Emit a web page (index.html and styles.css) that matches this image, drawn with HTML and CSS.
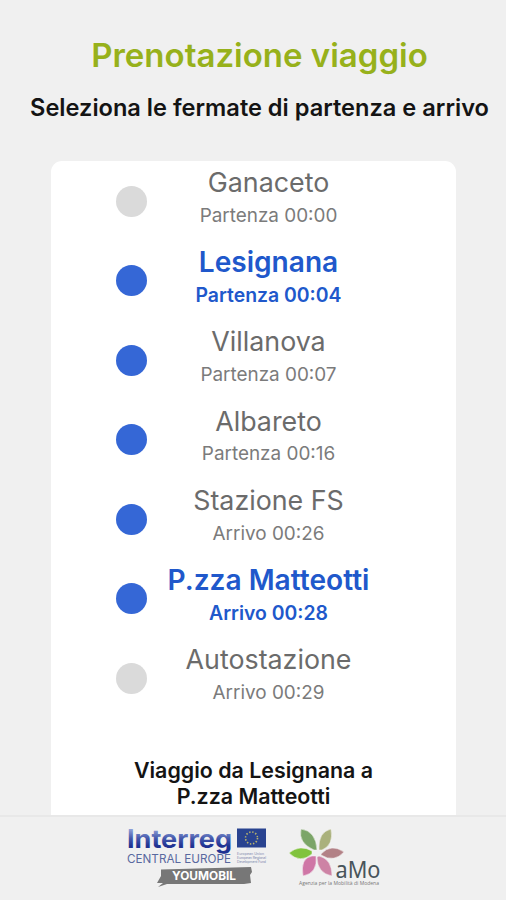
FILE: index.html
```html
<!DOCTYPE html>
<html lang="it">
<head>
<meta charset="utf-8">
<title>Prenotazione viaggio</title>
<link rel="stylesheet" href="styles.css">
</head>
<body>
<main class="screen">
  <header class="heading">
    <h1 class="title">Prenotazione viaggio</h1>
    <p class="subtitle">Seleziona le fermate di partenza e arrivo</p>
  </header>
  <section class="card">
    <ul class="stops">
      <li class="stop"><span class="dot dot-off"></span><div class="info"><span class="name">Ganaceto</span><span class="time">Partenza 00:00</span></div></li>
      <li class="stop selected"><span class="dot"></span><div class="info"><span class="name">Lesignana</span><span class="time">Partenza 00:04</span></div></li>
      <li class="stop"><span class="dot"></span><div class="info"><span class="name">Villanova</span><span class="time">Partenza 00:07</span></div></li>
      <li class="stop"><span class="dot"></span><div class="info"><span class="name">Albareto</span><span class="time">Partenza 00:16</span></div></li>
      <li class="stop"><span class="dot"></span><div class="info"><span class="name">Stazione FS</span><span class="time">Arrivo 00:26</span></div></li>
      <li class="stop selected"><span class="dot"></span><div class="info"><span class="name">P.zza Matteotti</span><span class="time">Arrivo 00:28</span></div></li>
      <li class="stop"><span class="dot dot-off"></span><div class="info"><span class="name">Autostazione</span><span class="time">Arrivo 00:29</span></div></li>
    </ul>
    <p class="summary">Viaggio da Lesignana a<br>P.zza Matteotti</p>
  </section>
  <footer class="footer">
    <svg class="interreg" viewBox="0 0 146 64" width="146" height="64">
      <defs>
        <linearGradient id="ink" x1="0" y1="0" x2="0" y2="1">
          <stop offset="0.2" stop-color="#8d9ed6"/>
          <stop offset="0.5" stop-color="#4357ab"/>
          <stop offset="0.75" stop-color="#1f3292"/>
        </linearGradient>
      </defs>
      <text x="2" y="21.500" class="logo-main" textLength="105" lengthAdjust="spacingAndGlyphs" fill="url(#ink)">Interreg</text>
      <text x="2" y="37" class="logo-sub" textLength="104" lengthAdjust="spacingAndGlyphs">CENTRAL EUROPE</text>
      <rect x="112" y="2.500" width="29" height="19" fill="#294390"/>
      <circle cx="126.500" cy="12" r="6" fill="none" stroke="#b9b36c" stroke-width="1.600" stroke-dasharray="1.400 1.742"/>
      <text x="112" y="28.500" class="logo-fine" textLength="27">European Union</text>
      <text x="112" y="32.500" class="logo-fine" textLength="29">European Regional</text>
      <text x="112" y="36.500" class="logo-fine" textLength="29">Development Fund</text>
      <path d="M36 43.500 L126 41 L127 46 L125 49 L126 57 L119 58 L42 58 L33 61 L38 57 L32 57 L36 50 Z" fill="#777"/>
      <text x="47" y="54" class="logo-tag" textLength="64" lengthAdjust="spacingAndGlyphs">YOUMOBIL</text>
    </svg>
    <svg class="amo" viewBox="0 0 100 64" width="100" height="64">
      <g stroke="#f7f5f5" stroke-width="0.500">
        <path d="M29 24 Q13 17 16 3 Q31 5 32 24 Z" fill="#7ba568"/>
        <path d="M34 24 Q33 6 46 3 Q49 19 37 24 Z" fill="#aab17c"/>
        <path d="M27 28 Q15 38 4 27 Q15 18 27 25 Z" fill="#80c33d"/>
        <path d="M36 28 Q46 17 59 26 Q49 37 36 29 Z" fill="#b28186"/>
        <path d="M31 30 Q33 47 18 50 Q15 32 27 30 Z" fill="#cf76a6"/>
        <path d="M34 30 Q47 33 47 50 Q32 47 32 31 Z" fill="#cd83a5"/>
      </g>
      <text x="50.500" y="51.500" class="amo-name" textLength="45" lengthAdjust="spacingAndGlyphs">aMo</text>
      <text x="14" y="59" class="amo-fine" textLength="80">Agenzia per la Mobilità di Modena</text>
    </svg>
  </footer>
</main>
</body>
</html>
```
FILE: styles.css
```css
* { box-sizing: border-box; }
body { margin: 0; font-family: Inter, sans-serif; background: #f0f0f0; }
.screen { display: flex; flex-direction: column; width: 506px; height: 900px; overflow: hidden; }
.heading { flex: none; height: 161px; padding: 35px 0 0 13px; text-align: center; white-space: nowrap; }
.title { margin: 0; font-size: 33px; line-height: 40px; font-weight: 600; color: #97b11b; }
.subtitle { margin: 19px 0 0; font-size: 23.6px; line-height: 28px; font-weight: 600; color: #141414; }
.card { flex: none; height: 654px; margin: 0 50px 0 51px; overflow: hidden; background: #fff; border-radius: 11px 11px 0 0; }
.stops { margin: 0; padding: 0; list-style: none; }
.stop { display: flex; align-items: center; height: 79.5px; padding-left: 65px; color: #6b6b6b; }
.dot { flex: none; width: 31px; height: 31px; margin-top: 1px; border-radius: 50%; background: #3567d6; }
.dot-off { background: #dadada; }
.info { display: flex; flex-direction: column; align-items: center; width: 243px; height: 79.5px; padding-top: 5px; white-space: nowrap; }
.name { font-size: 26.8px; line-height: 32px; font-weight: 400; }
.time { font-size: 18.9px; line-height: 24px; margin-top: 5.5px; color: #7b7b7b; }
.selected .name, .selected .time { font-weight: 600; color: #2058cb; }
.selected .name { font-size: 28.1px; }
.selected .time { font-size: 19.4px; margin-top: 5px; }
.summary { margin: 39px 0 0; font-size: 21.4px; line-height: 26px; font-weight: 600; text-align: center; color: #141414; }
.footer { display: flex; align-items: flex-start; gap: 14px; flex: none; height: 85px; padding: 9px 0 0 125px; border-top: 2px solid #e8e8e8; }
.interreg, .amo { overflow: visible; }
.logo-main { font: 700 25px Inter, sans-serif; }
.logo-sub { font: 400 11.5px Inter, sans-serif; fill: #59699f; }
.logo-fine { font: 400 3.5px Inter, sans-serif; fill: #7d88ad; }
.logo-tag { font: 700 12px Inter, sans-serif; fill: #fff; }
.amo-name { font: 400 23px "Noto Sans", sans-serif; fill: #48545a; }
.amo-fine { font: 400 5px "Open Sans", sans-serif; fill: #777; }
```
